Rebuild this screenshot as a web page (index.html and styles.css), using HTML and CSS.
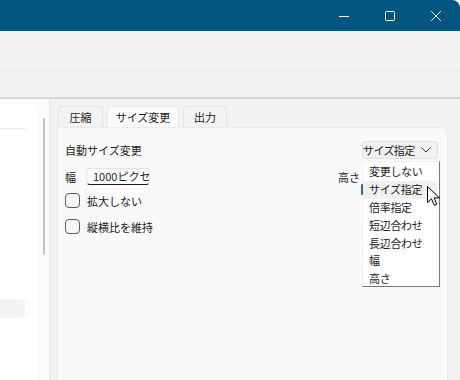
FILE: index.html
```html
<!DOCTYPE html>
<html lang="ja">
<head>
<meta charset="utf-8">
<link rel="stylesheet" href="styles.css">
</head>
<body>
<div class="window">
  <div class="titlebar">
    <div class="tbtn"><svg width="10" height="10" viewBox="0 0 10 10"><path d="M0 5.5H10" stroke="#fff" stroke-width="1"/></svg></div>
    <div class="tbtn"><svg width="10" height="10" viewBox="0 0 10 10"><rect x="0.5" y="0.5" width="9" height="9" rx="1" fill="none" stroke="#fff" stroke-width="1"/></svg></div>
    <div class="tbtn"><svg width="10" height="10" viewBox="0 0 10 10"><path d="M0 0L10 10M10 0L0 10" stroke="#fff" stroke-width="1"/></svg></div>
  </div>
  <div class="toolbar">
    <div class="band"></div>
    <div class="band"></div>
  </div>
  <div class="main">
    <div class="leftpane">
      <div class="list">
        <div class="listline"></div>
        <div class="listitem"></div>
      </div>
      <div class="scroll"><div class="thumb"></div></div>
    </div>
    <div class="sep"></div>
    <div class="tabarea">
      <div class="tabs">
        <div class="tab t1">圧縮</div>
        <div class="tab t2 active">サイズ変更</div>
        <div class="tab t3">出力</div>
      </div>
      <div class="panel">
        <div class="row r1">
          <span>自動サイズ変更</span>
          <div class="combo"><span class="ctext">サイズ指定</span><svg width="10" height="6" viewBox="0 0 10 6"><path d="M0.5 0.5L5 5L9.5 0.5" fill="none" stroke="#333" stroke-width="1"/></svg></div>
        </div>
        <div class="row r2">
          <div class="field"><span>幅</span><div class="textbox">1000ピクセル</div></div>
          <div class="field right"><span>高さ</span><div class="textbox hbox"></div></div>
        </div>
        <div class="row chk c1"><div class="box"></div><span>拡大しない</span></div>
        <div class="row chk c2"><div class="box"></div><span>縦横比を維持</span></div>
        <div class="dropdown">
          <div class="item">変更しない</div>
          <div class="item sel">サイズ指定</div>
          <div class="item">倍率指定</div>
          <div class="item">短辺合わせ</div>
          <div class="item">長辺合わせ</div>
          <div class="item">幅</div>
          <div class="item">高さ</div>
        </div>
        <svg class="cursor" width="14" height="21" viewBox="0 0 14 21"><path d="M0.5 0.5V16.5L4.5 12.8L7.3 19.3L9.8 18.2L7.1 11.9H12.5Z" fill="#fff" stroke="#000" stroke-width="1" stroke-linejoin="round"/></svg>
      </div>
    </div>
  </div>
</div>
</body>
</html>
```
FILE: styles.css
```css
* { box-sizing: border-box; }
html, body { margin: 0; padding: 0; }
body {
  width: 460px; height: 380px; overflow: hidden; background: #fff;
  font-family: "Noto Sans CJK JP", "Noto Sans", sans-serif;
  font-size: 11px; color: #1b1b1b;
}
.window {
  width: 460px; height: 380px; display: flex; flex-direction: column;
  background: #f2f2f2; border-top-right-radius: 8px; overflow: hidden;
}
.titlebar {
  height: 31px; flex: none; background: #02567f;
  display: flex; justify-content: flex-end; padding-right: 1px;
}
.tbtn { width: 46px; height: 31px; display: flex; align-items: center; justify-content: center; }
.toolbar { height: 68px; flex: none; border-bottom: 2px solid #d5d5d5; display: flex; flex-direction: column; }
.band { height: 33px; background: #f2f2f2; }
.band + .band { border-top: 1px solid #f8f8f8; }
.main { flex: 1; display: flex; min-height: 0; }
.leftpane {
  width: 49px; flex: none; background: #fbfbfb; position: relative;
  padding-top: 6px; display: flex;
}
.list {
  width: 38px; background: #fff; border-top-right-radius: 4px;
  padding-top: 23px;
}
.listline { width: 26px; height: 1px; background: #ececec; }
.listitem { width: 25px; height: 19px; margin-top: 170px; background: #f3f3f3; border-radius: 0 4px 4px 0; }
.scroll { width: 11px; padding-top: 13px; padding-left: 5px; }
.thumb { width: 2px; height: 137px; background: #c4c4c4; border-radius: 1px; }
.sep { width: 8px; flex: none; background: #f0f0f0; border-left: 1px solid #e6e6e6; }
.tabarea { flex: 1; display: flex; flex-direction: column; background: #f2f2f2; padding-right: 12px; }
.tabs { height: 28px; flex: none; display: flex; align-items: flex-end; padding-left: 1px; gap: 4px; }
.tab {
  height: 21px; display: flex; align-items: center; justify-content: center;
  background: #f3f3f3; border: 1px solid #e2e2e2; border-bottom: none;
  border-radius: 4px 4px 0 0; color: #1b1b1b;
}
.t1 { width: 45px; }
.t2 { width: 72px; }
.t3 { width: 44px; }
.tab.active { background: #fbfbfb; border-color: #e8e8e8; }
.panel {
  flex: 1; background: #fafafa; border: 1px solid #ebebeb; border-bottom: none;
  border-top-right-radius: 6px; position: relative;
  padding: 13px 9px 0 7px; display: flex; flex-direction: column;
}
.row { display: flex; align-items: center; }
.r1 { height: 18px; justify-content: space-between; }
.combo {
  width: 76px; height: 18px; display: flex; align-items: center; justify-content: space-between;
  background: #f1f1f1; border: 1px solid #e0e0e0; border-radius: 4px; padding: 0 6px 0 0;
}
.ctext { letter-spacing: -0.6px; }
.r2 { height: 17px; margin-top: 9px; justify-content: space-between; }
.field { display: flex; align-items: center; }
.textbox {
  width: 64px; height: 17px; margin-left: 10px; background: #fff; border: 1px solid #e4e4e4;
  border-bottom: 1px solid #1b1b1b; border-radius: 4px; padding-left: 6px;
  overflow: hidden; white-space: nowrap; line-height: 15px;
}
.field.right .textbox { width: 76px; margin-left: 2px; }
.chk { height: 15px; }
.c1 { margin-top: 8px; }
.c2 { margin-top: 11px; }
.box { width: 15px; height: 15px; border: 1px solid #5c5c5c; border-radius: 4px; background: #f6f6f6; margin-right: 7px; }
.dropdown {
  position: absolute; left: 304px; top: 33px; width: 78px; height: 126px;
  background: #fff; border: 1px solid #f0f0f0; border-right-color: #777; border-bottom-color: #777;
  padding-top: 1px;
}
.item { height: 17.9px; line-height: 17.9px; padding-left: 6px; position: relative; letter-spacing: -0.3px; }
.item.sel { background: #f0f0f0; border-radius: 3px; margin-right: 2px; }
.item.sel::before {
  content: ""; position: absolute; left: -2px; top: 3px; width: 2px; height: 11px;
  background: #2a6a9c; border-radius: 1px;
}
.cursor { position: absolute; left: 369px; top: 58px; }
```
